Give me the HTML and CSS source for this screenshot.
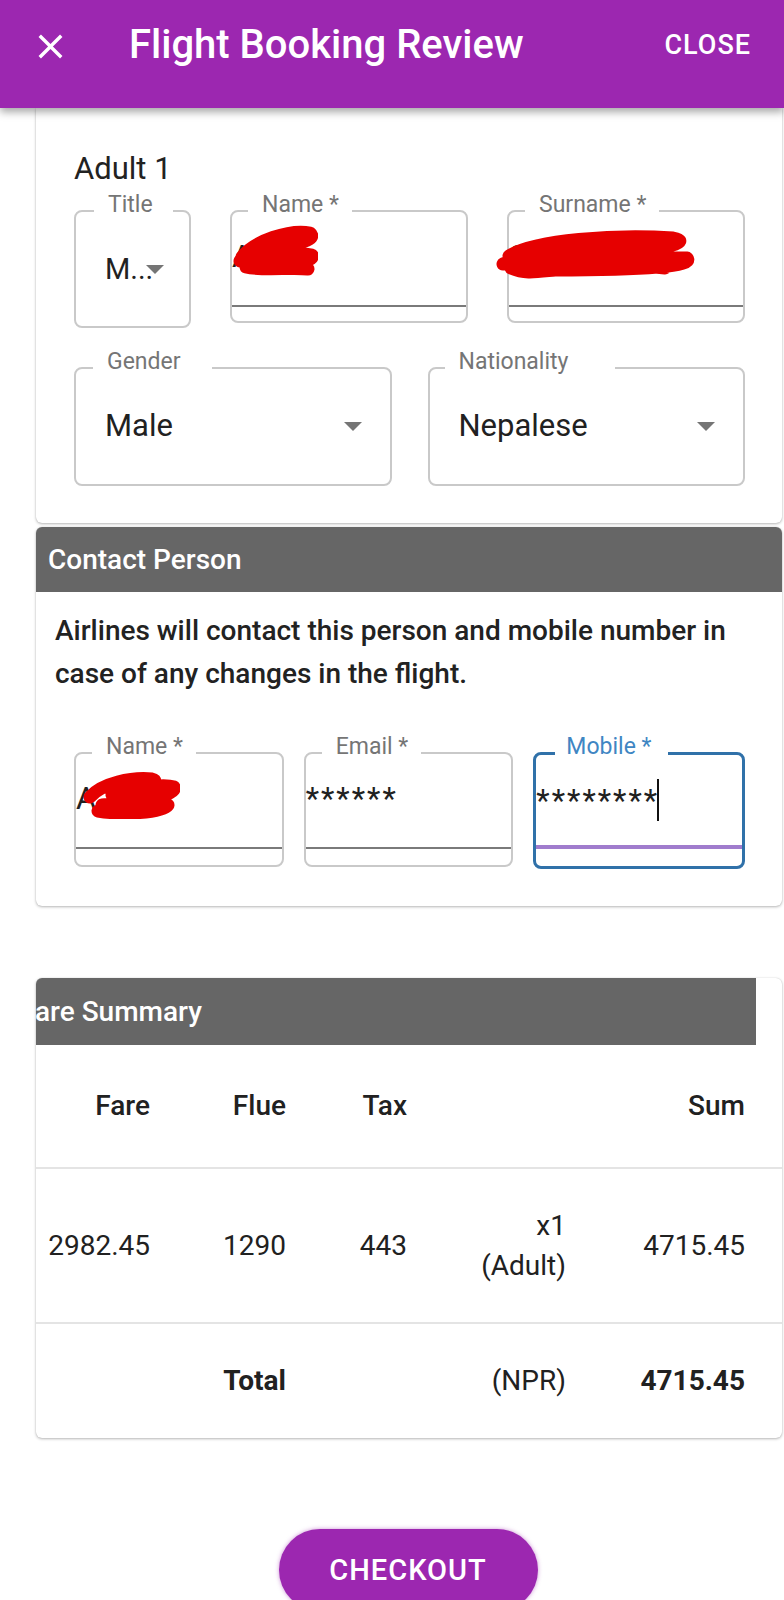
FILE: index.html
```html
<!DOCTYPE html>
<html lang="en">
<head>
<meta charset="utf-8">
<title>Flight Booking Review</title>
<link rel="stylesheet" href="styles.css">
</head>
<body>
<header class="appbar">
  <div class="toolbar">
    <svg class="close-icon" viewBox="0 0 24 24"><path d="M19 6.41L17.59 5 12 10.59 6.41 5 5 6.41 10.59 12 5 17.59 6.41 19 12 13.41 17.59 19 19 17.59 13.41 12z"/></svg>
    <h1 class="title">Flight Booking Review</h1>
    <span class="close-btn">CLOSE</span>
  </div>
</header>

<main class="content">
  <section class="card card-adult">
    <div class="adult-label">Adult 1</div>
    <div class="row row-top">
      <fieldset class="field field-title">
        <legend class="pad-title">Title</legend>
        <div class="select-value select-short"><span>M...</span><svg class="arrow arrow-tight" viewBox="7 10 10 5"><path d="M7 10l5 5 5-5z"/></svg></div>
      </fieldset>
      <fieldset class="field field-text">
        <legend>Name *</legend>
        <div class="input">A</div>
        <svg class="redact redact-name" viewBox="0 0 86 54"><path d="M10 34C22 18 58 6 78 10C86 16 66 22 42 24C26 26 12 30 8 38C24 34 60 28 80 32C84 40 50 42 14 44C30 48 60 44 76 46"/></svg>
      </fieldset>
      <fieldset class="field field-text">
        <legend>Surname *</legend>
        <div class="input">S</div>
        <svg class="redact redact-surname" viewBox="0 0 202 58"><path d="M14 30C40 14 120 8 178 12C198 16 172 24 120 24C80 24 30 28 8 38C40 36 120 28 192 32C200 40 150 44 60 44C40 46 30 48 16 42C60 38 130 38 170 42"/></svg>
      </fieldset>
    </div>
    <div class="row row-bottom">
      <fieldset class="field field-select">
        <legend class="pad-gender">Gender</legend>
        <div class="select-value"><span>Male</span><svg class="arrow" viewBox="7 10 10 5"><path d="M7 10l5 5 5-5z"/></svg></div>
      </fieldset>
      <fieldset class="field field-select">
        <legend class="pad-nation">Nationality</legend>
        <div class="select-value"><span>Nepalese</span><svg class="arrow" viewBox="7 10 10 5"><path d="M7 10l5 5 5-5z"/></svg></div>
      </fieldset>
    </div>
  </section>

  <section class="card card-contact">
    <div class="card-head">Contact Person</div>
    <p class="contact-note">Airlines will contact this person and mobile number in case of any changes in the flight.</p>
    <div class="contact-fields">
      <fieldset class="field field-contact">
        <legend>Name *</legend>
        <div class="input">A</div>
        <svg class="redact redact-contact" viewBox="0 0 98 50"><path d="M8 28C20 14 50 8 70 10C80 12 60 20 30 26C50 20 80 14 92 18C96 26 60 32 20 36C40 38 70 34 86 36C80 44 40 46 16 42"/></svg>
      </fieldset>
      <fieldset class="field field-contact">
        <legend>Email *</legend>
        <div class="input input-masked">******</div>
      </fieldset>
      <fieldset class="field field-contact field-focused">
        <legend class="pad-mobile">Mobile *</legend>
        <div class="input input-masked">********<span class="caret"></span></div>
      </fieldset>
    </div>
  </section>

  <section class="card card-fare">
    <div class="card-head fare-head">Fare Summary</div>
    <div class="fare-row fare-row-head">
      <span>Fare</span><span>Flue</span><span>Tax</span><span></span><span>Sum</span>
    </div>
    <div class="fare-row fare-row-item">
      <span>2982.45</span><span>1290</span><span>443</span><span>x1<br>(Adult)</span><span>4715.45</span>
    </div>
    <div class="fare-row fare-row-total">
      <span></span><span>Total</span><span></span><span class="regular">(NPR)</span><span>4715.45</span>
    </div>
  </section>
</main>

<div class="actions">
  <button class="checkout" type="button">CHECKOUT</button>
</div>
</body>
</html>
```

FILE: styles.css
```css
* { box-sizing: content-box; }

body {
  margin: 0;
  font-family: Roboto, "Liberation Sans", Arial, sans-serif;
  background: #ffffff;
  color: #212121;
}

/* App bar */
.appbar {
  height: 108px;
  background: #9c27b0;
  color: #ffffff;
  box-shadow: 0 4px 8px rgba(0, 0, 0, 0.35);
  position: relative;
  z-index: 2;
}
.toolbar {
  height: 90px;
  display: flex;
  align-items: center;
  padding: 0 33px 0 30px;
}
.close-icon {
  width: 41px;
  height: 41px;
  fill: #ffffff;
  flex: none;
  margin-top: 3px;
}
.title {
  margin: 0 0 0 58px;
  flex: 1;
  font-size: 40px;
  font-weight: 500;
  line-height: 48px;
}
.close-btn {
  font-size: 27px;
  font-weight: 500;
  letter-spacing: 1px;
}

/* Content */
.content {
  padding: 0 2px 0 36px;
}
.card {
  background: #ffffff;
  border-radius: 6px;
  box-shadow: 0 1px 3px rgba(0, 0, 0, 0.28), 0 0 1px rgba(0, 0, 0, 0.18);
  overflow: hidden;
}
.card-adult {
  padding: 43px 37px 37px 38px;
  border-radius: 0 0 6px 6px;
}
.adult-label {
  font-size: 31px;
  line-height: 36px;
  margin-bottom: 6px;
  color: #222222;
}
.row {
  display: flex;
  align-items: flex-start;
}
.row-top { gap: 39px; }
.row-bottom { gap: 36px; margin-top: 22px; }

/* Outlined fields */
.field {
  margin: 0;
  padding: 0;
  min-width: 0;
  border: 2px solid #c9c9c9;
  border-radius: 8px;
  position: relative;
}
.field legend {
  font-size: 23px;
  line-height: 24px;
  padding: 0 13px 12px 14px;
  margin-left: 16px;
  color: #757575;
  white-space: nowrap;
}
.field legend.pad-title { margin-left: 18px; padding-right: 20px; }
.field legend.pad-gender { margin-left: 17px; padding-right: 31px; }
.field legend.pad-nation { margin-left: 15px; padding-right: 47px; }
.field legend.pad-mobile { margin-left: 19px; padding-left: 11px; padding-right: 17px; }

.field-title { width: 113px; flex: none; height: 131px; }
.field-text { flex: 1; height: 126px; }
.field-select { flex: 1; height: 132px; }
.field-contact { flex: 1; height: 128px; }

.select-value {
  display: flex;
  align-items: center;
  justify-content: space-between;
  height: 40px;
  margin-top: 20px;
  padding: 0 28px 0 29px;
  font-size: 31px;
  line-height: 40px;
  color: #212121;
}
.select-value.select-short {
  justify-content: flex-start;
  padding: 0 0 0 29px;
  font-size: 29px;
}
.arrow {
  width: 18px;
  height: 9px;
  fill: #757575;
  flex: none;
}
.arrow-tight { margin-left: -7px; }

.input {
  margin-top: 8px;
  height: 40px;
  padding-bottom: 28px;
  border-bottom: 2px solid #7a7a7a;
  font-size: 31px;
  line-height: 40px;
  white-space: nowrap;
  color: #212121;
}
.input-masked { letter-spacing: 2px; }

.field-focused {
  border: 3px solid #3071a9;
}
.field-focused legend { color: #3f86c3; }
.field-focused .input {
  border-bottom: 4px solid #a07ccd;
  padding-bottom: 26px;
}
.caret {
  display: inline-block;
  width: 2px;
  height: 42px;
  background: #111111;
  vertical-align: -10px;
  margin-left: -2px;
}

/* Redaction scribbles drawn over the values */
.redact {
  position: absolute;
  fill: none;
  stroke: #e60000;
  stroke-width: 13;
  stroke-linecap: round;
  stroke-linejoin: round;
}
.redact-name { left: 0; top: -6px; width: 86px; height: 54px; }
.redact-surname { left: -14px; top: -3px; width: 202px; height: 58px; }
.redact-contact { left: 6px; top: -2px; width: 98px; height: 50px; }

/* Contact card */
.card-contact {
  margin-top: 4px;
  padding-bottom: 37px;
}
.card-head {
  height: 65px;
  line-height: 65px;
  padding-left: 12px;
  background: #666666;
  color: #ffffff;
  font-size: 28px;
  font-weight: 500;
  white-space: nowrap;
}
.contact-note {
  margin: 17px 19px 0;
  font-size: 28px;
  font-weight: 500;
  line-height: 43px;
  color: #222222;
}
.contact-fields {
  display: flex;
  gap: 20px;
  margin: 40px 37px 0 38px;
}

/* Fare card */
.card-fare {
  margin-top: 72px;
}
.fare-head {
  height: 67px;
  line-height: 67px;
  margin: 0 26px 0 -26px;
  padding-left: 10px;
}
.fare-row {
  display: grid;
  grid-template-columns: 114px 136px 121px 159px 179px;
  align-items: center;
  padding-right: 37px;
  font-size: 28px;
  line-height: 40px;
  text-align: right;
  color: #212121;
}
.fare-row-head {
  height: 122px;
  font-weight: 500;
  border-bottom: 2px solid #e4e4e4;
}
.fare-row-item {
  height: 153px;
  border-bottom: 2px solid #e4e4e4;
}
.fare-row-total {
  height: 114px;
  font-weight: 700;
}
.fare-row-total .regular { font-weight: 400; }

/* Checkout */
.actions {
  display: flex;
  justify-content: center;
  padding: 91px 0 0 32px;
}
.checkout {
  width: 259px;
  height: 82px;
  padding: 0;
  border: 0;
  border-radius: 41px;
  background: #9c27b0;
  color: #ffffff;
  font-family: Roboto, "Liberation Sans", Arial, sans-serif;
  font-size: 29px;
  font-weight: 500;
  letter-spacing: 1px;
  box-shadow: 0 0 4px rgba(156, 39, 176, 0.5);
}
```
